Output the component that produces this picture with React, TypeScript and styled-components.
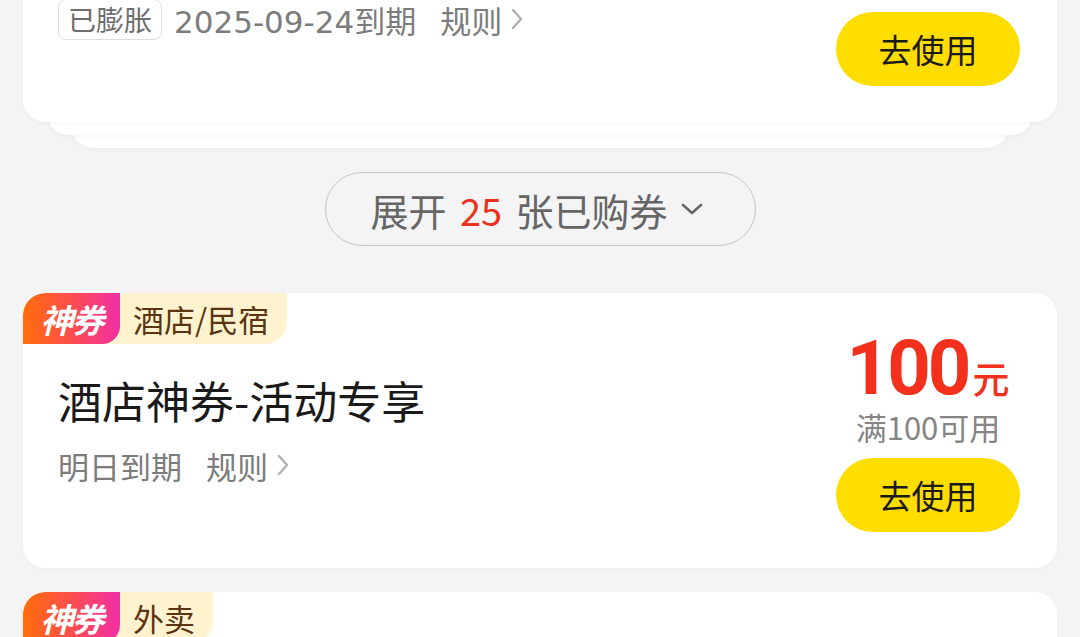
import React from "react";
import styled, { createGlobalStyle } from "styled-components";

interface Coupon {
  id: string;
  category: string;
  title: string;
  amount: string;
  condition: string;
  expiry: string;
  expandedTag?: string;
}

const purchased: Coupon = {
  id: "c1",
  category: "外卖",
  title: "外卖神券-膨胀专享",
  amount: "15",
  condition: "满30可用",
  expiry: "2025-09-24到期",
  expandedTag: "已膨胀",
};

const coupons: Coupon[] = [
  {
    id: "c2",
    category: "酒店/民宿",
    title: "酒店神券-活动专享",
    amount: "100",
    condition: "满100可用",
    expiry: "明日到期",
  },
  {
    id: "c3",
    category: "外卖",
    title: "外卖神券-天天可用",
    amount: "20",
    condition: "满40可用",
    expiry: "明日到期",
  },
];

function ArrowRight() {
  return (
    <svg width="14" height="24" viewBox="0 0 14 24" fill="none">
      <polyline points="3,3 11,12 3,21" stroke="#b0b0b0" strokeWidth="2.4" strokeLinecap="round" strokeLinejoin="round" />
    </svg>
  );
}

function ArrowDown() {
  return (
    <svg width="24" height="14" viewBox="0 0 24 14" fill="none">
      <polyline points="3,3 12,11 21,3" stroke="#666" strokeWidth="2.6" strokeLinecap="round" strokeLinejoin="round" />
    </svg>
  );
}

function CouponCard({ coupon }: { coupon: Coupon }) {
  return (
    <$Card>
      <$Badge>
        <$HotTag>神券</$HotTag>
        <$Category>{coupon.category}</$Category>
      </$Badge>
      <$Left>
        <$Title>{coupon.title}</$Title>
        <$Meta>
          {coupon.expandedTag && <$StateTag>{coupon.expandedTag}</$StateTag>}
          <$Expiry>{coupon.expiry}</$Expiry>
          <$Rule>
            规则
            <ArrowRight />
          </$Rule>
        </$Meta>
      </$Left>
      <$Right>
        <$Price>
          <$Amount>{coupon.amount}</$Amount>
          <$Unit>元</$Unit>
        </$Price>
        <$Condition>{coupon.condition}</$Condition>
        <$UseButton>去使用</$UseButton>
      </$Right>
    </$Card>
  );
}

export default function App() {
  return (
    <>
      <GlobalStyle />
      <$Page>
        <$Stack>
          <CouponCard coupon={purchased} />
          <$Layer depth={1} />
          <$Layer depth={2} />
        </$Stack>

        <$ExpandButton>
          展开 <$Count>25</$Count> 张已购券
          <ArrowDown />
        </$ExpandButton>

        <$List>
          {coupons.map(coupon => (
            <CouponCard key={coupon.id} coupon={coupon} />
          ))}
        </$List>
      </$Page>
    </>
  );
}

const GlobalStyle = createGlobalStyle`
  html, body {
    margin: 0;
    padding: 0;
    background: #f4f4f4;
  }

  body {
    width: 1080px;
    height: 637px;
    overflow: hidden;
    font-family: "Noto Sans CJK SC", "Noto Sans", sans-serif;
  }
`;

const $Page = styled.div`
  padding: 0 23px;
  display: flex;
  flex-direction: column;
`;

const $Stack = styled.div`
  margin-top: -153px;
  display: flex;
  flex-direction: column;
`;

const $Card = styled.div`
  position: relative;
  z-index: 3;
  min-height: 275px;
  box-sizing: border-box;
  padding: 40px 37px 36px 35px;
  display: flex;
  justify-content: space-between;
  background: #fff;
  border-radius: 22px;
  box-shadow: 0 2px 4px rgba(0, 0, 0, 0.03);
  overflow: hidden;
`;

const $Layer = styled.div<{ depth: number }>`
  position: relative;
  z-index: ${props => 3 - props.depth};
  height: 40px;
  margin: -27px ${props => props.depth * 24}px 0;
  background: #fff;
  border-radius: 0 0 22px 22px;
  box-shadow: 0 2px 4px rgba(0, 0, 0, 0.035);
`;

const $Badge = styled.div`
  position: absolute;
  top: 0;
  left: 0;
  height: 51px;
  display: flex;
  align-items: stretch;
  background: #fff3cf;
  border-radius: 22px 0 22px 0;
`;

const $HotTag = styled.span`
  width: 97px;
  display: flex;
  align-items: center;
  justify-content: center;
  background: linear-gradient(90deg, #ff6d0c 0%, #fb4a55 55%, #f22ea6 100%);
  border-radius: 22px 0 18px 0;
  color: #fff;
  font-size: 33px;
  font-weight: 700;
  font-style: italic;
  letter-spacing: -2px;
`;

const $Category = styled.span`
  padding: 0 18px 0 13px;
  display: flex;
  align-items: center;
  color: #5b3512;
  font-size: 31px;
`;

const $Left = styled.div`
  padding-top: 39px;
  display: flex;
  flex-direction: column;
`;

const $Title = styled.div`
  line-height: 56px;
  font-size: 44px;
  color: #1a1a1a;
`;

const $Meta = styled.div`
  margin-top: 17px;
  height: 40px;
  display: flex;
  align-items: center;
  gap: 12px;
  font-size: 31px;
  color: #7c7c7c;
  white-space: nowrap;
`;

const $StateTag = styled.span`
  height: 39px;
  padding: 0 9px;
  display: flex;
  align-items: center;
  border: 1px solid #dedede;
  border-radius: 8px;
  font-size: 28px;
  color: #6e6e6e;
`;

const $Expiry = styled.span`
  font-family: "DejaVu Sans", "Noto Sans CJK SC", sans-serif;
`;

const $Rule = styled.span`
  margin-left: 12px;
  display: flex;
  align-items: center;
  gap: 8px;
`;

const $Right = styled.div`
  width: 184px;
  display: flex;
  flex-direction: column;
  align-items: center;
`;

const $Price = styled.div`
  height: 70px;
  display: flex;
  align-items: baseline;
  color: #f2301c;
  line-height: 70px;
`;

const $Amount = styled.span`
  font-family: Roboto, "Noto Sans", sans-serif;
  font-size: 76px;
  font-weight: 700;
  letter-spacing: -3px;
`;

const $Unit = styled.span`
  margin-left: 4px;
  font-size: 37px;
  font-weight: 500;
`;

const $Condition = styled.div`
  margin-top: 6px;
  line-height: 36px;
  font-size: 31px;
  color: #858585;
`;

const $UseButton = styled.button`
  margin-top: 13px;
  width: 184px;
  height: 74px;
  padding: 0;
  border: none;
  border-radius: 37px;
  background: #ffdd00;
  font-family: inherit;
  font-size: 33px;
  color: #1a1a1a;
`;

const $ExpandButton = styled.button`
  align-self: center;
  margin-top: 24px;
  width: 431px;
  height: 74px;
  padding: 0 6px 0 0;
  display: flex;
  align-items: center;
  justify-content: center;
  background: transparent;
  border: 1.5px solid #c6c6c6;
  border-radius: 37px;
  font-family: inherit;
  font-size: 38px;
  color: #666;
  white-space: pre;

  svg {
    margin-left: 12px;
  }
`;

const $Count = styled.span`
  margin: 0 5px;
  color: #e8321e;
`;

const $List = styled.div`
  margin-top: 47px;
  display: flex;
  flex-direction: column;
  gap: 24px;
`;
